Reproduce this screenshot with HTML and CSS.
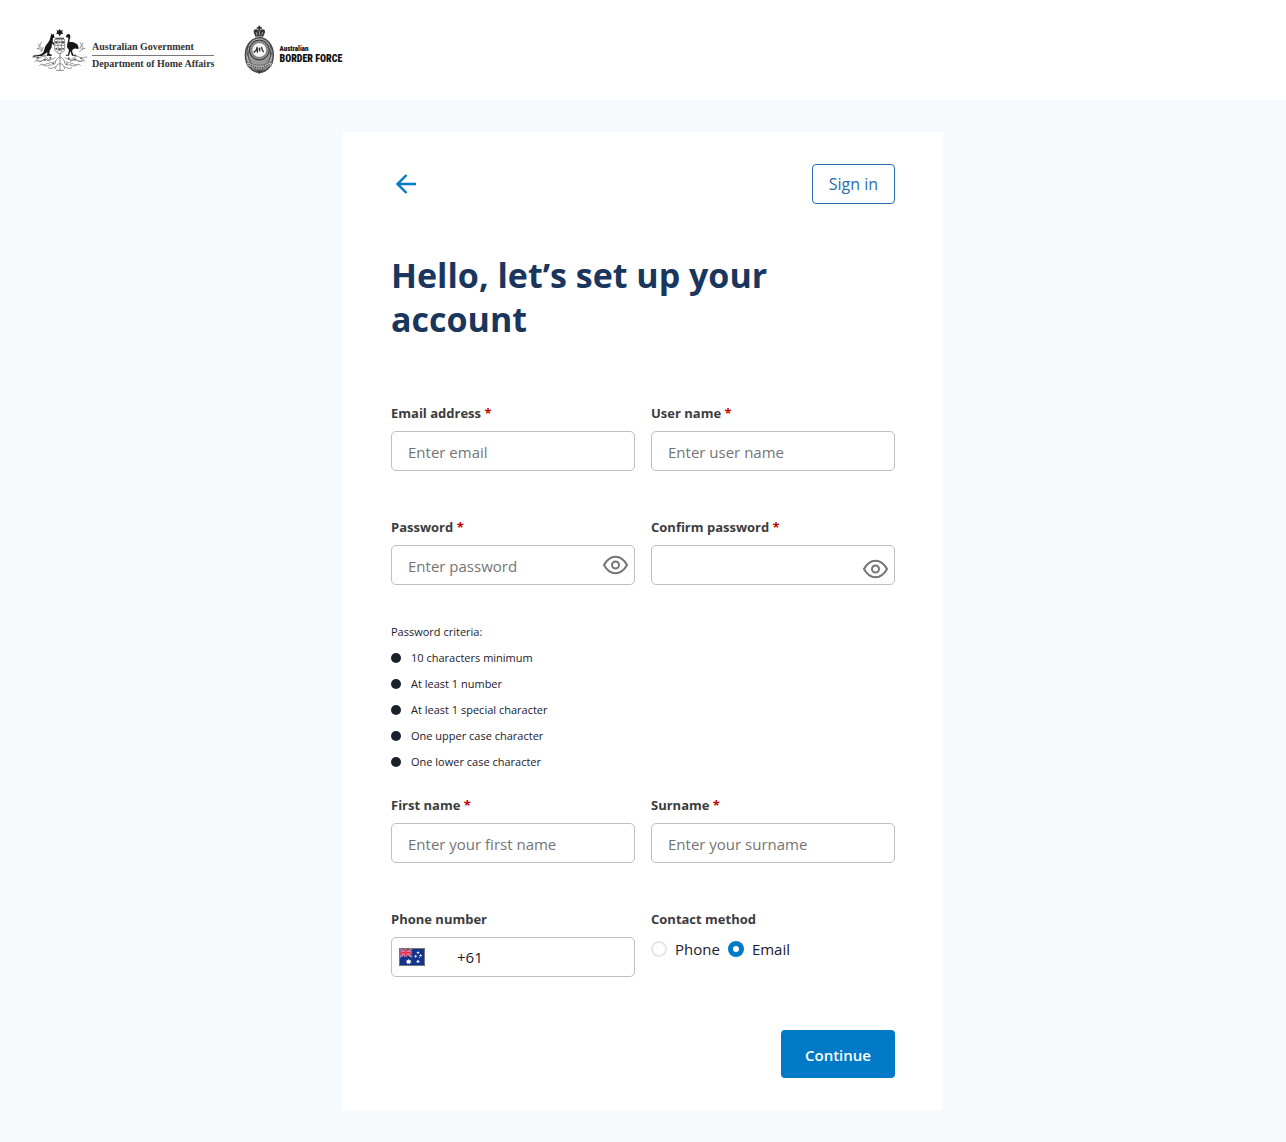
FILE: index.html
```html
<!DOCTYPE html>
<html lang="en">
<head>
<meta charset="utf-8">
<meta name="viewport" content="width=device-width, initial-scale=1">
<title>Create your account</title>
<link rel="stylesheet" href="styles.css">
</head>
<body>
<header class="site-header">
  <div class="brand">
    <svg class="arms" viewBox="36 39 168 132" aria-hidden="true">
      <g fill="none" stroke="#777" stroke-width="2.4">
        <path d="M42 121h54M38 128c8-6 14 6 22 0s14-6 22 2 16 2 24-2M44 140c8-8 14 4 22-2s12-8 20 0 12 6 20 0M58 152c6-8 14 2 20-4s12 0 18 4"/>
        <path d="M202 128c-8-6-14 6-22 0s-14-6-22 2-16 2-24-2M196 140c-8-8-14 4-22-2s-12-8-20 0-12 6-20 0M182 152c-6-8-14 2-20-4s-12 0-18 4"/>
        <path d="M54 86c4 8 10 8 10 18M64 80c0 8-8 12-8 22M50 100c6 0 10 4 16 8M70 96c-4 6-2 12-8 16"/>
        <path d="M190 84c-4 8-10 8-10 18M180 82c4 8 10 12 8 22M196 100c-8 0-12 6-18 10"/>
        <path d="M120 112v56M120 126c-10 2-14 12-14 20M120 126c10 2 14 12 14 20M120 146c-8 0-12 6-14 16M120 146c8 0 12 6 14 16M108 166h24"/>
        <path d="M104 73h30v28c0 8-8 12-15 16-8-4-15-8-15-16zM104 91h30M114 73v38M124 73v38"/>
        <path d="M48 132c6 8 16 8 22 2M74 128c4 10 14 10 20 4M192 132c-6 8-16 8-22 2M166 128c-4 10-14 10-20 4M66 146c6 8 16 8 24 4M174 146c-6 8-16 8-24 4M84 158c8 4 16 2 22-4M156 158c-8 4-16 2-22-4"/>
      </g>
      <g fill="#555">
        <circle cx="109" cy="82" r="4"/><circle cx="119" cy="82" r="3"/><circle cx="129" cy="82" r="4"/>
        <circle cx="109" cy="101" r="3"/><circle cx="119" cy="103" r="4"/><circle cx="129" cy="101" r="3"/>
        <circle cx="54" cy="128" r="3"/><circle cx="74" cy="135" r="3"/><circle cx="91" cy="128" r="3"/><circle cx="100" cy="146" r="3"/>
        <circle cx="146" cy="130" r="3"/><circle cx="165" cy="134" r="3"/><circle cx="184" cy="130" r="3"/><circle cx="140" cy="148" r="3"/>
        <path d="M106 68h26v4h-26z"/>
      </g>
      <path fill="#161616" d="M119 41l3 6 7-2-3 6 4 5-7 1-4 7-4-7-7-1 4-5-3-6 7 2z"/>
      <path fill="#161616" d="M93 60l2-5 3 4 5-3-1 6 2 6-5 1-1 10 5 8-2 4-5-6-1 12-6 10-1 9 7 3v3H81l1-11-6 5-12 7-26 2v-3c14 0 25-3 31-9 4-5 4-14 8-21 5-8 12-13 13-21z"/>
      <path fill="#161616" d="M137 66l3-6c4-5 11-3 11 3 0 8-5 15-2 19 7-3 17 0 22 6 4 4 5 9 4 15-7-4-13-2-16 0l-3 5 4 11h9v3h-13l-5-14-4 14h-9v-3h6l3-15c-6-4-7-11-5-18 1-6 4-12 3-18z"/>
    </svg>
    <div class="brand-text">
      <span class="brand-line brand-line--top">Australian Government</span>
      <span class="brand-line">Department of Home Affairs</span>
    </div>
  </div>
  <div class="brand">
    <svg class="badge" viewBox="54 30 93 150" aria-hidden="true">
      <g fill="none" stroke="#333">
        <path fill="#333" stroke="none" d="M97 32h6v5h5v4h-5v6c5-7 15-4 14 4-1 6-4 10-6 15H89c-2-5-5-9-6-15-1-8 9-11 14-4v-6h-5v-4h5z"/>
        <path stroke="#ddd" stroke-width="2" d="M90 51l3 9M110 51l-3 9M100 48v12M90 64h20"/>
        <ellipse cx="100" cy="120" rx="42" ry="52" fill="#999" stroke="#444" stroke-width="4"/>
        <ellipse cx="100" cy="120" rx="36" ry="46" stroke="#ddd" stroke-width="3" stroke-dasharray="4 3"/>
        <path stroke="#444" stroke-width="3" d="M62 112c7 10 4 22 13 29M68 92c-8 11 2 20-3 30M138 112c-7 10-4 22-13 29M132 92c8 11-2 20 3 30M75 154c12 3 38 3 50 0M84 164c10 3 22 3 32 0"/>
        <circle cx="100" cy="105" r="30" fill="#777" stroke-width="3"/>
        <circle cx="100" cy="105" r="25" stroke="#ddd" stroke-width="2" stroke-dasharray="3 3"/>
        <circle cx="100" cy="105" r="21" fill="#f5f5f5" stroke="none"/>
        <path stroke="#333" stroke-width="4" d="M94 95l-4 12-7 5M95 99l-1 14M106 96c3 5 0 8 7 15M101 98v11"/>
        <path fill="#bbb" stroke="#444" stroke-width="2" d="M60 142c12-3 18 9 40 9s28-12 40-9l-6 13c-11-1-18 8-34 8s-23-9-34-8z"/>
        <path stroke="#444" stroke-width="4" stroke-dasharray="4 3" d="M67 149c12 1 18 9 33 9s21-8 33-9"/>
        <path fill="#444" d="M92 168h16l-8 9z"/>
      </g>
    </svg>
    <div class="force-text">
      <span class="force-small">Australian</span>
      <span class="force-large">BORDER FORCE</span>
    </div>
  </div>
</header>

<main class="page">
  <form class="card">
    <div class="card-top">
      <button type="button" class="back" aria-label="Back">
        <svg viewBox="0 0 30 30" width="30" height="30" aria-hidden="true"><path d="M25 15H7M15.500 6l-9 9 9 9" fill="none" stroke="#007ac7" stroke-width="2.4"/></svg>
      </button>
      <button type="button" class="sign-in">Sign in</button>
    </div>

    <h1 class="title">Hello, let’s set up your account</h1>

    <div class="fields">
      <div class="field">
        <label class="label" for="email">Email address <span class="required">*</span></label>
        <input class="input" id="email" type="email" placeholder="Enter email">
      </div>
      <div class="field">
        <label class="label" for="username">User name <span class="required">*</span></label>
        <input class="input" id="username" type="text" placeholder="Enter user name">
      </div>
      <div class="field">
        <label class="label" for="password">Password <span class="required">*</span></label>
        <div class="secret">
          <input class="input" id="password" type="password" placeholder="Enter password">
          <button type="button" class="reveal" aria-label="Show password">
            <svg viewBox="0 0 26 20" width="26" height="20" aria-hidden="true"><g fill="none" stroke="#757575" stroke-width="2"><path d="M1 10C7-1 18-1 24 10 18 21 7 21 1 10z"/><circle cx="12.500" cy="10" r="3.500"/></g></svg>
          </button>
        </div>
      </div>
      <div class="field">
        <label class="label" for="confirm">Confirm password <span class="required">*</span></label>
        <div class="secret">
          <input class="input" id="confirm" type="password">
          <button type="button" class="reveal reveal--low" aria-label="Show confirmed password">
            <svg viewBox="0 0 26 20" width="26" height="20" aria-hidden="true"><g fill="none" stroke="#757575" stroke-width="2"><path d="M1 10C7-1 18-1 24 10 18 21 7 21 1 10z"/><circle cx="12.500" cy="10" r="3.500"/></g></svg>
          </button>
        </div>
      </div>
    </div>

    <div class="criteria">
      <p class="criteria-title">Password criteria:</p>
      <ul class="criteria-list">
        <li>10 characters minimum</li>
        <li>At least 1 number</li>
        <li>At least 1 special character</li>
        <li>One upper case character</li>
        <li>One lower case character</li>
      </ul>
    </div>

    <div class="fields">
      <div class="field">
        <label class="label" for="first">First name <span class="required">*</span></label>
        <input class="input" id="first" type="text" placeholder="Enter your first name">
      </div>
      <div class="field">
        <label class="label" for="surname">Surname <span class="required">*</span></label>
        <input class="input" id="surname" type="text" placeholder="Enter your surname">
      </div>
      <div class="field">
        <label class="label" for="phone">Phone number</label>
        <div class="input phone">
          <svg class="flag" viewBox="0 0 78 54" aria-hidden="true">
            <path fill="#12348c" d="M0 0h78v54H0z"/>
            <path stroke="#c9b8dc" stroke-width="5" d="M2 2l37 25M39 2L2 27"/>
            <path stroke="#e8334f" stroke-width="2" d="M2 2l37 25M39 2L2 27"/>
            <path stroke="#f3a0b4" stroke-width="9" d="M20 2v25M2 14h37"/>
            <path stroke="#e8334f" stroke-width="6" d="M20 2v25M2 14h37"/>
            <g fill="#fff">
              <path d="M29 32l2 5 5-2-2 5 4 3-5 1v5l-4-3-4 3v-5l-5-1 4-3-2-5 5 2z"/>
              <path d="M57 10l2 3 3 1-3 2-2 3-2-3-3-2 3-1zM50 20l2 3 3 1-3 2-2 3-2-3-3-2 3-1zM65 18l2 3 3 1-3 2-2 3-2-3-3-2 3-1zM57 35l2 3 4 1-3 2 1 4-4-2-4 2 1-4-3-2 4-1z"/>
              <circle cx="61" cy="28" r="1.5"/>
            </g>
            <path fill="none" stroke="#777" stroke-width="3" d="M1.500 1.500h75v51h-75z"/>
          </svg>
          <input class="phone-input" id="phone" type="tel" value="+61">
        </div>
      </div>
      <fieldset class="field contact">
        <legend class="label">Contact method</legend>
        <div class="options">
          <label class="option"><input class="radio" type="radio" name="contact" value="phone">Phone</label>
          <label class="option"><input class="radio" type="radio" name="contact" value="email" checked>Email</label>
        </div>
      </fieldset>
    </div>

    <div class="actions">
      <button type="submit" class="continue">Continue</button>
    </div>
  </form>
</main>
</body>
</html>
```
FILE: styles.css
```css
*, *::before, *::after { box-sizing: border-box; }

body {
  margin: 0;
  background: #f6fafd;
  color: #1a202c;
  font-family: "Segoe UI", "Open Sans", "Noto Sans", sans-serif;
  font-size: 15px;
  line-height: 24px;
}

button, input { font: inherit; color: inherit; }
button { cursor: pointer; }

.site-header {
  display: flex;
  align-items: center;
  gap: 30px;
  height: 100px;
  padding: 0 32px;
  background: #fff;
}

.brand { display: flex; align-items: center; gap: 4px; }
.arms { width: 56px; height: 44px; }
.badge { width: 31px; height: 50px; }

.brand-text {
  display: flex;
  flex-direction: column;
  margin-top: 10px;
  color: #333;
  font: bold 10px/16px "Liberation Serif", serif;
}
.brand-line--top { border-bottom: 1px solid #777; }

.force-text {
  display: flex;
  flex-direction: column;
  margin-top: 8px;
  color: #111;
  font-family: "Roboto Condensed", "Open Sans Condensed", "Noto Sans Condensed", Roboto, sans-serif;
  font-weight: 900;
}
.force-small { font-size: 7px; line-height: 8px; }
.force-large { font-size: 10px; line-height: 11px; }

.page { padding: 32px 16px; }

.card {
  max-width: 600px;
  margin: 0 auto;
  padding: 32px 48px;
  background: #fff;
}

.card-top { display: flex; align-items: center; justify-content: space-between; }

.back { display: flex; padding: 0; border: 0; background: none; }

.sign-in {
  height: 40px;
  padding: 0 16px;
  border: 1px solid #2b6cb0;
  border-radius: 4px;
  background: #fff;
  color: #2b6cb0;
  font-size: 16px;
  font-weight: 500;
}

.title {
  max-width: 420px;
  margin: 49px 0 62px;
  color: #1a365d;
  font-size: 34px;
  font-weight: 700;
  line-height: 44px;
}

.fields {
  display: grid;
  grid-template-columns: repeat(2, minmax(0, 1fr));
  gap: 46px 16px;
}

.field { display: flex; flex-direction: column; gap: 8px; min-width: 0; }

.label {
  color: #3c3c3c;
  font-size: 13px;
  font-weight: 700;
  line-height: 20px;
}
.required { color: #c00000; }

.input {
  width: 100%;
  height: 40px;
  padding: 2px 16px 0;
  border: 1px solid #bfbfbf;
  border-radius: 5px;
  background: #fff;
}
.input::placeholder { color: #757575; opacity: 1; }

.secret { position: relative; }
.secret .input { padding-right: 40px; }

.reveal {
  position: absolute;
  top: 10px;
  right: 6px;
  display: flex;
  padding: 0;
  border: 0;
  background: none;
}
.reveal--low { top: 14px; }

.criteria {
  margin: 34px 0 20px;
  font-size: 11px;
  line-height: 26px;
}
.criteria-title { margin: 0; }
.criteria-list { margin: 0; padding: 0; list-style: none; }
.criteria-list li { display: flex; align-items: center; gap: 10px; }
.criteria-list li::before {
  content: "";
  width: 10px;
  height: 10px;
  border-radius: 50%;
  background: #1a202c;
}

.phone { display: flex; align-items: center; gap: 32px; padding: 0 7px; }
.flag { flex: none; width: 26px; height: 18px; }
.phone-input {
  flex: 1;
  min-width: 0;
  padding: 0;
  border: 0;
  background: none;
}

.contact { margin: 0; padding: 0; border: 0; display: block; }
.contact .label { padding: 0; margin-bottom: 8px; }
.options { display: flex; gap: 8px; }
.option { display: flex; align-items: center; gap: 8px; }

.radio {
  appearance: none;
  width: 16px;
  height: 16px;
  margin: 0;
  border: 2px solid #e2e8f0;
  border-radius: 50%;
  background: #fff;
}
.radio:checked { border: 5px solid #007ac7; }

.actions { display: flex; justify-content: flex-end; margin-top: 53px; }

.continue {
  height: 48px;
  padding: 2px 24px 0;
  border: 0;
  border-radius: 4px;
  background: #007ac7;
  color: #fff;
  font-weight: 600;
}
```
